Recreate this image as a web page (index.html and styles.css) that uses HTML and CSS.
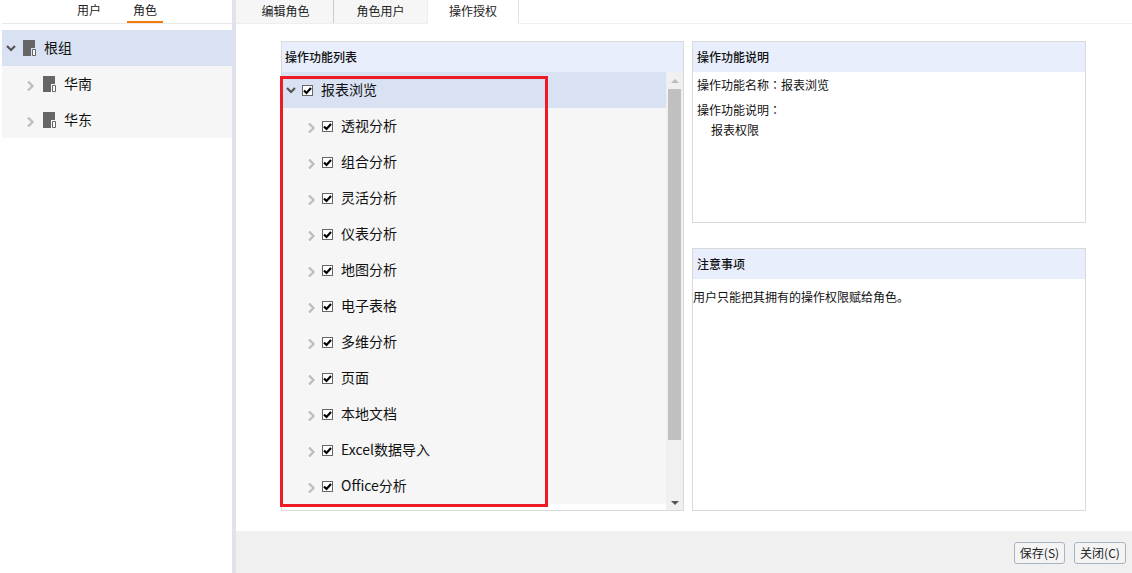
FILE: index.html
```html
<!DOCTYPE html>
<html lang="zh">
<head>
<meta charset="utf-8">
<title>操作授权</title>
<link rel="stylesheet" href="styles.css">
</head>
<body>
<div class="app">
  <aside class="side">
    <div class="side-tabs">
      <span class="side-tab">用户</span>
      <span class="side-tab active">角色</span>
    </div>
    <div class="side-tree">
      <div class="side-row selected">
        <svg class="arrow dark" viewBox="0 0 10 10"><path d="M1 3l4 4 4-4" /></svg>
        <svg class="group" viewBox="0 0 13 16"><path class="g" d="M0 0h12v8H8v8H0z"/><path class="g2" d="M9.500 9.500h3v6h-3z"/></svg>
        <span class="label-text">根组</span>
      </div>
      <div class="side-row child">
        <svg class="arrow" viewBox="0 0 10 10"><path d="M3 .5l4.500 4.500-4.500 4.500" /></svg>
        <svg class="group" viewBox="0 0 13 16"><path class="g" d="M0 0h12v8H8v8H0z"/><path class="g2" d="M9.500 9.500h3v6h-3z"/></svg>
        <span class="label-text">华南</span>
      </div>
      <div class="side-row child">
        <svg class="arrow" viewBox="0 0 10 10"><path d="M3 .5l4.500 4.500-4.500 4.500" /></svg>
        <svg class="group" viewBox="0 0 13 16"><path class="g" d="M0 0h12v8H8v8H0z"/><path class="g2" d="M9.500 9.500h3v6h-3z"/></svg>
        <span class="label-text">华东</span>
      </div>
    </div>
  </aside>
  <main class="main">
    <nav class="tabs">
      <span class="tab first">编辑角色</span>
      <span class="tab second">角色用户</span>
      <span class="tab current">操作授权</span>
    </nav>
    <div class="content">
      <section class="panel list-panel">
        <h2 class="panel-head">操作功能列表</h2>
        <div class="list-body">
          <ul class="tree">
            <li class="tree-row root">
              <svg class="arrow dark" viewBox="0 0 10 10"><path d="M1 3l4 4 4-4" /></svg>
              <span class="check"><svg viewBox="0 0 9 9"><path d="M1 4.500l2.500 2.500 4.500-5" /></svg></span>
              <span class="label-text">报表浏览</span>
            </li>
            <li class="tree-row"><svg class="arrow" viewBox="0 0 10 10"><path d="M3 .5l4.500 4.500-4.500 4.500" /></svg><span class="check"><svg viewBox="0 0 9 9"><path d="M1 4.500l2.500 2.500 4.500-5" /></svg></span><span class="label-text">透视分析</span></li>
            <li class="tree-row"><svg class="arrow" viewBox="0 0 10 10"><path d="M3 .5l4.500 4.500-4.500 4.500" /></svg><span class="check"><svg viewBox="0 0 9 9"><path d="M1 4.500l2.500 2.500 4.500-5" /></svg></span><span class="label-text">组合分析</span></li>
            <li class="tree-row"><svg class="arrow" viewBox="0 0 10 10"><path d="M3 .5l4.500 4.500-4.500 4.500" /></svg><span class="check"><svg viewBox="0 0 9 9"><path d="M1 4.500l2.500 2.500 4.500-5" /></svg></span><span class="label-text">灵活分析</span></li>
            <li class="tree-row"><svg class="arrow" viewBox="0 0 10 10"><path d="M3 .5l4.500 4.500-4.500 4.500" /></svg><span class="check"><svg viewBox="0 0 9 9"><path d="M1 4.500l2.500 2.500 4.500-5" /></svg></span><span class="label-text">仪表分析</span></li>
            <li class="tree-row"><svg class="arrow" viewBox="0 0 10 10"><path d="M3 .5l4.500 4.500-4.500 4.500" /></svg><span class="check"><svg viewBox="0 0 9 9"><path d="M1 4.500l2.500 2.500 4.500-5" /></svg></span><span class="label-text">地图分析</span></li>
            <li class="tree-row"><svg class="arrow" viewBox="0 0 10 10"><path d="M3 .5l4.500 4.500-4.500 4.500" /></svg><span class="check"><svg viewBox="0 0 9 9"><path d="M1 4.500l2.500 2.500 4.500-5" /></svg></span><span class="label-text">电子表格</span></li>
            <li class="tree-row"><svg class="arrow" viewBox="0 0 10 10"><path d="M3 .5l4.500 4.500-4.500 4.500" /></svg><span class="check"><svg viewBox="0 0 9 9"><path d="M1 4.500l2.500 2.500 4.500-5" /></svg></span><span class="label-text">多维分析</span></li>
            <li class="tree-row"><svg class="arrow" viewBox="0 0 10 10"><path d="M3 .5l4.500 4.500-4.500 4.500" /></svg><span class="check"><svg viewBox="0 0 9 9"><path d="M1 4.500l2.500 2.500 4.500-5" /></svg></span><span class="label-text">页面</span></li>
            <li class="tree-row"><svg class="arrow" viewBox="0 0 10 10"><path d="M3 .5l4.500 4.500-4.500 4.500" /></svg><span class="check"><svg viewBox="0 0 9 9"><path d="M1 4.500l2.500 2.500 4.500-5" /></svg></span><span class="label-text">本地文档</span></li>
            <li class="tree-row"><svg class="arrow" viewBox="0 0 10 10"><path d="M3 .5l4.500 4.500-4.500 4.500" /></svg><span class="check"><svg viewBox="0 0 9 9"><path d="M1 4.500l2.500 2.500 4.500-5" /></svg></span><span class="label-text">Excel数据导入</span></li>
            <li class="tree-row"><svg class="arrow" viewBox="0 0 10 10"><path d="M3 .5l4.500 4.500-4.500 4.500" /></svg><span class="check"><svg viewBox="0 0 9 9"><path d="M1 4.500l2.500 2.500 4.500-5" /></svg></span><span class="label-text">Office分析</span></li>
          </ul>
          <div class="scrollbar">
            <span class="tri up"></span>
            <span class="thumb"></span>
            <span class="tri down"></span>
          </div>
        </div>
        <div class="highlight"></div>
      </section>
      <div class="right-col">
        <section class="panel desc-panel">
          <h2 class="panel-head">操作功能说明</h2>
          <p class="line name">操作功能名称<span class="colon" lang="zh-TW">：</span>报表浏览</p>
          <p class="line label">操作功能说明<span class="colon" lang="zh-TW">：</span></p>
          <p class="line indent">报表权限</p>
        </section>
        <section class="panel note-panel">
          <h2 class="panel-head">注意事项</h2>
          <p class="note">用户只能把其拥有的操作权限赋给角色。</p>
        </section>
      </div>
    </div>
    <footer class="footer">
      <button class="btn save">保存(S)</button>
      <button class="btn">关闭(C)</button>
    </footer>
  </main>
</div>
</body>
</html>
```
FILE: styles.css
```css
* { box-sizing: border-box; }
html, body { margin: 0; height: 100%; }
body {
  font-family: "Noto Sans CJK SC", "Noto Sans", sans-serif;
  font-size: 12px;
  color: #111;
  background: #fff;
  overflow: hidden;
}
.app { display: flex; width: 1132px; height: 573px; }

.side { width: 236px; flex: none; padding-left: 2px; border-right: 4px solid #e2e2ec; display: flex; flex-direction: column; background: #fff; }
.side-tabs { height: 24px; border-bottom: 1px solid #e8e8e8; display: flex; padding-left: 69px; gap: 20px; flex: none; }
.side-tab { width: 36px; height: 23px; text-align: center; line-height: 19px; font-size: 12px; color: #222; }
.side-tab.active { border-bottom: 2px solid #f57a0a; }
.side-tree { margin-top: 6px; }
.side-row { height: 36px; display: flex; align-items: center; background: #f6f6f6; font-size: 14px; padding-left: 4px; }
.side-row.selected { background: #d9e2f3; }
.side-row .group { width: 13px; height: 16px; margin-left: 8px; margin-right: 8px; flex: none; }
.side-row.selected .group { margin-left: 7px; }
.side-row.child { padding-left: 23px; }
.label-text { padding-bottom: 2px; }
.arrow { width: 10px; height: 10px; flex: none; fill: none; stroke: #bcbcbc; stroke-width: 2.2; }
.arrow:not(.dark) { margin-top: 3px; }
.arrow.dark { stroke: #555; }
.g { fill: #666; }
.g2 { fill: #fff; stroke: #666; stroke-width: 1; }

.main { flex: 1; min-width: 0; display: flex; flex-direction: column; }
.tabs { height: 24px; display: flex; border-bottom: 1px solid #eee; flex: none; }
.tab { height: 23px; text-align: center; line-height: 22px; background: #f6f6f6; color: #222; font-size: 12px; }
.tab.first { width: 98px; padding-left: 2px; border-right: 1px solid #ccc; }
.tab.second { width: 93px; }
.tab.current { width: 92px; background: #fff; height: 24px; border-left: 1px solid #eee; border-right: 1px solid #e4e4e4; }

.content { flex: 1; display: flex; padding: 17px 46px 20px 45px; gap: 8px; min-height: 0; }
.panel { border: 1px solid #d9d9d9; position: relative; background: #fff; }
.panel-head { margin: 0; height: 30px; line-height: 29px; background: #e8eefb; font-size: 12px; font-weight: 500; color: #111; padding-left: 4px; }
.list-panel { width: 403px; height: 470px; }
.list-panel .panel-head { padding-left: 3px; }
.list-body { display: flex; height: 438px; }
.tree { list-style: none; margin: 0; padding: 0; width: 385px; height: 432px; background: #f6f6f6; }
.tree-row { height: 36px; display: flex; align-items: center; padding-left: 24px; font-size: 14px; }
.tree-row.root { background: #d9e2f3; padding-left: 4px; }
.check { width: 11px; height: 11px; border: 1px solid #666; background: #fff; margin-left: 6px; margin-right: 8px; flex: none; display: flex; }
.check svg { width: 9px; height: 9px; fill: none; stroke: #000; stroke-width: 2.2; }
.scrollbar { width: 17px; background: #f0f0f0; display: flex; flex-direction: column; align-items: center; }
.thumb { width: 13px; height: 351px; background: #c0c0c0; margin-top: 6px; }
.tri { width: 0; height: 0; border-left: 4px solid transparent; border-right: 4px solid transparent; }
.tri.up { border-bottom: 4px solid #bbb; margin-top: 7px; }
.tri.down { border-top: 4px solid #555; margin-top: auto; margin-bottom: 5px; }
.highlight { position: absolute; left: -2px; top: 34px; width: 268px; height: 431px; border: 3px solid #ed1c24; pointer-events: none; }

.right-col { width: 394px; display: flex; flex-direction: column; gap: 25px; }
.desc-panel { height: 182px; }
.note-panel { height: 263px; }
.line { margin: 0 0 0 4px; font-size: 12px; line-height: 18px; }
.colon { font-family: "Noto Sans CJK TC", sans-serif; }
.line.name { margin-top: 4px; }
.line.label { margin-top: 7px; }
.line.indent { margin-left: 18px; margin-top: 2px; }
.note { margin: 9px 0 0; font-size: 12px; line-height: 18px; }

.footer { height: 42px; background: #f0f0f0; flex: none; display: flex; justify-content: flex-end; align-items: flex-start; padding: 11px 6px 0 0; gap: 9px; }
.btn { width: 52px; height: 22px; padding: 0 0 2px; font: inherit; font-size: 12px; color: #222; background: #f4f4f4; border: 1px solid #a9b4c2; border-radius: 3px; }
.btn.save { width: 51px; }
```
